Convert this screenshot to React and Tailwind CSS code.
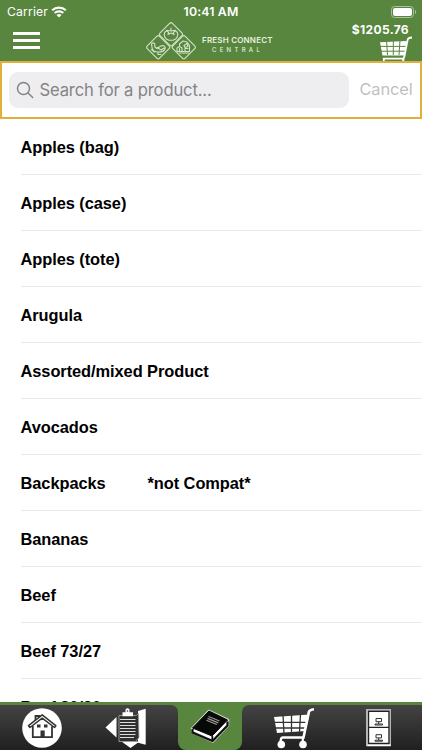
import React from 'react';

const products = [
  { name: 'Apples (bag)' },
  { name: 'Apples (case)' },
  { name: 'Apples (tote)' },
  { name: 'Arugula' },
  { name: 'Assorted/mixed Product' },
  { name: 'Avocados' },
  { name: 'Backpacks', note: '*not Compat*' },
  { name: 'Bananas' },
  { name: 'Beef' },
  { name: 'Beef 73/27' },
  { name: 'Beef 80/20' },
];

function Wifi() {
  return (
    <svg className="ml-[5px] h-3 w-4" viewBox="0 0 16 12" fill="none" stroke="#fff" strokeWidth="2.1">
      <path d="M1.2 4.3C5 .7 11 .7 14.8 4.3" />
      <path d="M3.7 7.1c2.4-2.3 6.2-2.3 8.6 0" />
      <path d="M8 11.6 5.5 9c1.4-1.3 3.6-1.3 5 0z" fill="#fff" stroke="none" />
    </svg>
  );
}

function Logo() {
  return (
    <svg className="h-[38px] w-[50px] shrink-0" viewBox="146 22 50 38" fill="none" stroke="#d3e3c8" strokeWidth="1.1" strokeLinejoin="round" strokeLinecap="round">
      <rect x="162.300" y="25.500" width="17.400" height="17.400" rx="2" transform="rotate(45 171 34.200)" />
      <rect x="149.500" y="38.600" width="17.400" height="17.400" rx="2" transform="rotate(45 158.200 47.300)" />
      <rect x="175.100" y="38.600" width="17.400" height="17.400" rx="2" transform="rotate(45 183.800 47.300)" />
      <path d="M166.500 31c-3.500 1.500-3 8 2.500 9.200h4c5.500-1.200 6-7.700 2.500-9.200M171 28v3M171 31l-4.500-.7 2.200 2.300-.8 2 3.100-1.600 3.100 1.600-.8-2 2.200-2.300z" />
      <path d="M151.500 43.800l2-1 1.300 1v3l2 1.700 4-2.500c3-1 5 .5 4.300 2.500-.7 2.800-3 3.500-6.500 3.500-4 0-6-1-6.500-4zM151.500 49.500l3 2.500M158 52v2.500h3M157 47.500l4 2.500 3-2" />
      <path d="M177 51.500v-3.500l2.500-1.500 2.500 1.500v3.500zM179.500 46v-2l3.500-3 4 1 2.500 3.500v6H182M184 45.500l3-2 1 3-3 1zM185 51v-2.500h3M179.500 51v-2.500M179 53h9.500" />
    </svg>
  );
}

function HeaderCart() {
  return (
    <svg className="ml-auto h-[25px] w-[33px]" viewBox="380 36 33 25" fill="none">
      <path d="M380 42.300l26.500-1.300-2 14.500h-22z" fill="#fff" />
      <path d="M380 46.400h26M381 51.200h25M386.500 40l1 15M393.300 40v15M400 40l-1 15" stroke="#58863f" strokeWidth="1" />
      <path d="M412 37.500q-4 .3-4.300 2L404.500 56 403.500 58.700H383.800V61" stroke="#fff" strokeWidth="1.800" />
      <path d="M403.300 58.500V61" stroke="#fff" strokeWidth="2" />
    </svg>
  );
}

function House() {
  return (
    <svg className="h-10 w-10" viewBox="22 707 40 40" fill="none">
      <circle cx="42" cy="727" r="19.800" fill="#fff" />
      <path d="M32.800 725v11.200h19.200v-11M35.500 720.500V715h4v2.500" stroke="#333" strokeWidth="1.800" />
      <path d="M28.500 724.700 42.200 713.800 55.800 724.700 54.500 726.500 42.200 717.200 30 726.500z" fill="#fff" stroke="#333" strokeWidth="1.500" strokeLinejoin="round" />
      <path d="M37 723.500h3.500v3H37zM44 723.500h3.500v3H44zM40.500 729.500h4.200v6.500h-4.200z" fill="#333" />
    </svg>
  );
}

function Clipboard() {
  return (
    <svg className="h-10 w-[42px]" viewBox="105 707 42 40" fill="none">
      <path d="M105.500 726.500 116.500 716v20.500zM138 710l7.700-2.200v36l-7.700-2zM121.500 740.500h18L130.500 747z" fill="#fff" />
      <path d="M119 714.500h17.500l2-2 .5 24-3.500 4H119z" fill="#303030" stroke="#aaa" strokeWidth=".8" />
      <path d="M120 718.500h15.500M120 721.500h15.500M120 724.500h15.500M120 727.500h15.500M120 730.500h15.500M120 733.500h15.500M120 736.500h14" stroke="#ddd" strokeWidth="1.200" />
      <path d="M122.500 711.200h3v-2.700q2-2.500 4 0v2.700h3.500v4h-10.500z" fill="#fff" />
      <circle cx="127.500" cy="710" r=".8" fill="#333" />
    </svg>
  );
}

function Book() {
  return (
    <svg className="h-[38px] w-[42px]" viewBox="189 708 42 38" strokeLinejoin="round">
      <path d="M192 729.500 209 711.800 228 721 228 726.500 213 742.500 192.500 733z" fill="#fff" stroke="#d2d2d2" strokeWidth="2.500" />
      <path d="M192.500 729 209 712 227.500 721 212 737z" fill="#070907" stroke="#070907" />
      <path d="M192.500 730v3.500l20 8.500 15-15.500v-4" fill="none" stroke="#111" strokeWidth="2.200" />
      <path d="M212.300 737v5" stroke="#111" strokeWidth="1.800" />
      <path d="M208.500 717.500 219.500 722M207.500 719.400l10.800 4.500M206.500 721.200l10.300 4.300" stroke="#999" strokeWidth="1.200" />
    </svg>
  );
}

function TabCart() {
  return (
    <svg className="h-[42px] w-[42px]" viewBox="273 706 42 42" fill="none">
      <path d="M274 716l35.500-2.500-4 16.500-28.500 2z" fill="#fff" />
      <path d="M274 721.300h35M275 727h34M283 714l1 19M291.500 714v18M300.500 713l-1 18" stroke="#333" strokeWidth="1.300" />
      <path d="M314 708.200q-4.500.3-5.200 3L303.500 736.500h-21q-1.800 0-1.800 5" stroke="#fff" strokeWidth="2.600" />
      <path d="M302.800 736v5" stroke="#fff" strokeWidth="2.200" />
      <circle cx="281.300" cy="743.500" r="3.800" fill="#fff" />
      <circle cx="303" cy="743.500" r="3.800" fill="#fff" />
    </svg>
  );
}

function Cabinet() {
  return (
    <svg className="h-[38px] w-[26px]" viewBox="366 708 26 38" fill="none">
      <path d="M366.300 708.300h24.500v37h-24.500z" fill="#fff" />
      <path d="M366.800 745v-36.200h23.500V743" stroke="#b5b5b5" strokeWidth="1.400" />
      <path d="M368.500 742.500v-32.300h20.500v32.300zM368.500 726.400h20.500" stroke="#222" strokeWidth="1.400" />
      <path d="M376 717.500h5.500v3.200H376zM375 723h7.500v1H375zM376 733.700h5.500v3.200H376zM375 739.200h7.500v1H375zM378.700 720.700v2.300M378.700 736.900v2.300" stroke="#333" strokeWidth="1" />
    </svg>
  );
}

export default function App() {
  return (
    <div className="flex h-[750px] w-[422px] flex-col overflow-hidden bg-white font-['Inter',sans-serif] text-black">
      <header className="h-[61px] shrink-0 bg-[#58863f] text-white">
        <div className="grid h-[22px] grid-cols-3 items-center">
          <div className="flex items-center pl-[7px]">
            <span className="w-[39px] text-[12.200px] leading-[18px] tracking-[0.150px] whitespace-nowrap">Carrier</span>
            <Wifi />
          </div>
          <div className="pt-px text-center text-[12.300px] leading-[22px] font-semibold tracking-[0.150px] whitespace-nowrap">10:41 AM</div>
          <div className="flex items-center justify-end pr-[6px]">
            <div className="h-[12px] w-[23px] rounded-[3.500px] border border-[#a9c19d] p-px">
              <div className="h-full rounded-[2px] bg-white" />
            </div>
            <div className="ml-px h-1 w-px rounded-r bg-[#a9c19d]" />
          </div>
        </div>
        <div className="flex h-[39px]">
          <div className="mt-[10px] ml-[13px] flex w-[27px] flex-col gap-1">
            <div className="h-[3px] bg-white" />
            <div className="h-[3px] bg-white" />
            <div className="h-[3px] bg-white" />
          </div>
          <div className="ml-[106px] flex">
            <Logo />
            <div className="ml-[6px] w-[72px] pt-[13px] text-[#e6f0df]">
              <div className="text-[8px] leading-[10px] font-semibold tracking-[0.200px] whitespace-nowrap">FRESH CONNECT</div>
              <div className="pl-[10px] text-[6px] leading-[9px] font-medium tracking-[3.300px] whitespace-nowrap">CENTRAL</div>
            </div>
          </div>
          <div className="mr-[9px] ml-auto">
            <div className="mr-[4px] h-[14px] text-right text-[12px] leading-[15px] font-bold tracking-[0.350px]">$1205.76</div>
            <HeaderCart />
          </div>
        </div>
      </header>

      <div className="flex h-[58px] shrink-0 items-center border-2 border-[#e2b03a] pl-[6.500px]">
        <div className="mb-px flex h-9 w-[340px] items-center rounded-[9px] bg-[#eeeef0] pl-[7px] text-[#838387]">
          <svg className="h-[18px] w-[18px]" viewBox="0 0 18 18" fill="none" stroke="currentColor" strokeWidth="1.500" strokeLinecap="round">
            <circle cx="7.500" cy="7.500" r="6" />
            <path d="m12 12 4.700 4.500" />
          </svg>
          <span className="mt-[2px] ml-[6px] text-[16.600px] tracking-[-0.150px] whitespace-nowrap">Search for a product...</span>
        </div>
        <span className="mb-px ml-[11px] text-[16.400px] tracking-[-0.100px] text-[#bfbfbf]">Cancel</span>
      </div>

      <main className="min-h-0 flex-1 overflow-hidden font-['Liberation_Sans',Arial,sans-serif] text-[16.400px] font-bold tracking-[-0.060px]">
        {products.map((p) => (
          <div key={p.name} className="ml-[20.500px] flex h-14 items-center border-b border-[#e9e9e9] pt-[2px] whitespace-nowrap">
            <span className={p.note ? 'w-[127px]' : ''}>{p.name}</span>
            {p.note && <span>{p.note}</span>}
          </div>
        ))}
      </main>

      <nav className="flex h-[48px] shrink-0 bg-[#58863f] pt-[3px]">
        <div className="flex w-[178px] items-center rounded-tr-[7px] bg-linear-to-b from-[#444] to-[#202020] pl-[22px]">
          <House />
          <div className="ml-[43px]"><Clipboard /></div>
        </div>
        <div className="w-16 bg-linear-to-b from-[#58863f] from-50% to-[#202020] to-50%">
          <div className="flex h-full items-center justify-center rounded-b-[8px] bg-[#58863f] pb-[3px]"><Book /></div>
        </div>
        <div className="flex flex-1 items-center rounded-tl-[7px] bg-linear-to-b from-[#444] to-[#202020] pl-[31px]">
          <TabCart />
          <div className="ml-[51px]"><Cabinet /></div>
        </div>
      </nav>
    </div>
  );
}
